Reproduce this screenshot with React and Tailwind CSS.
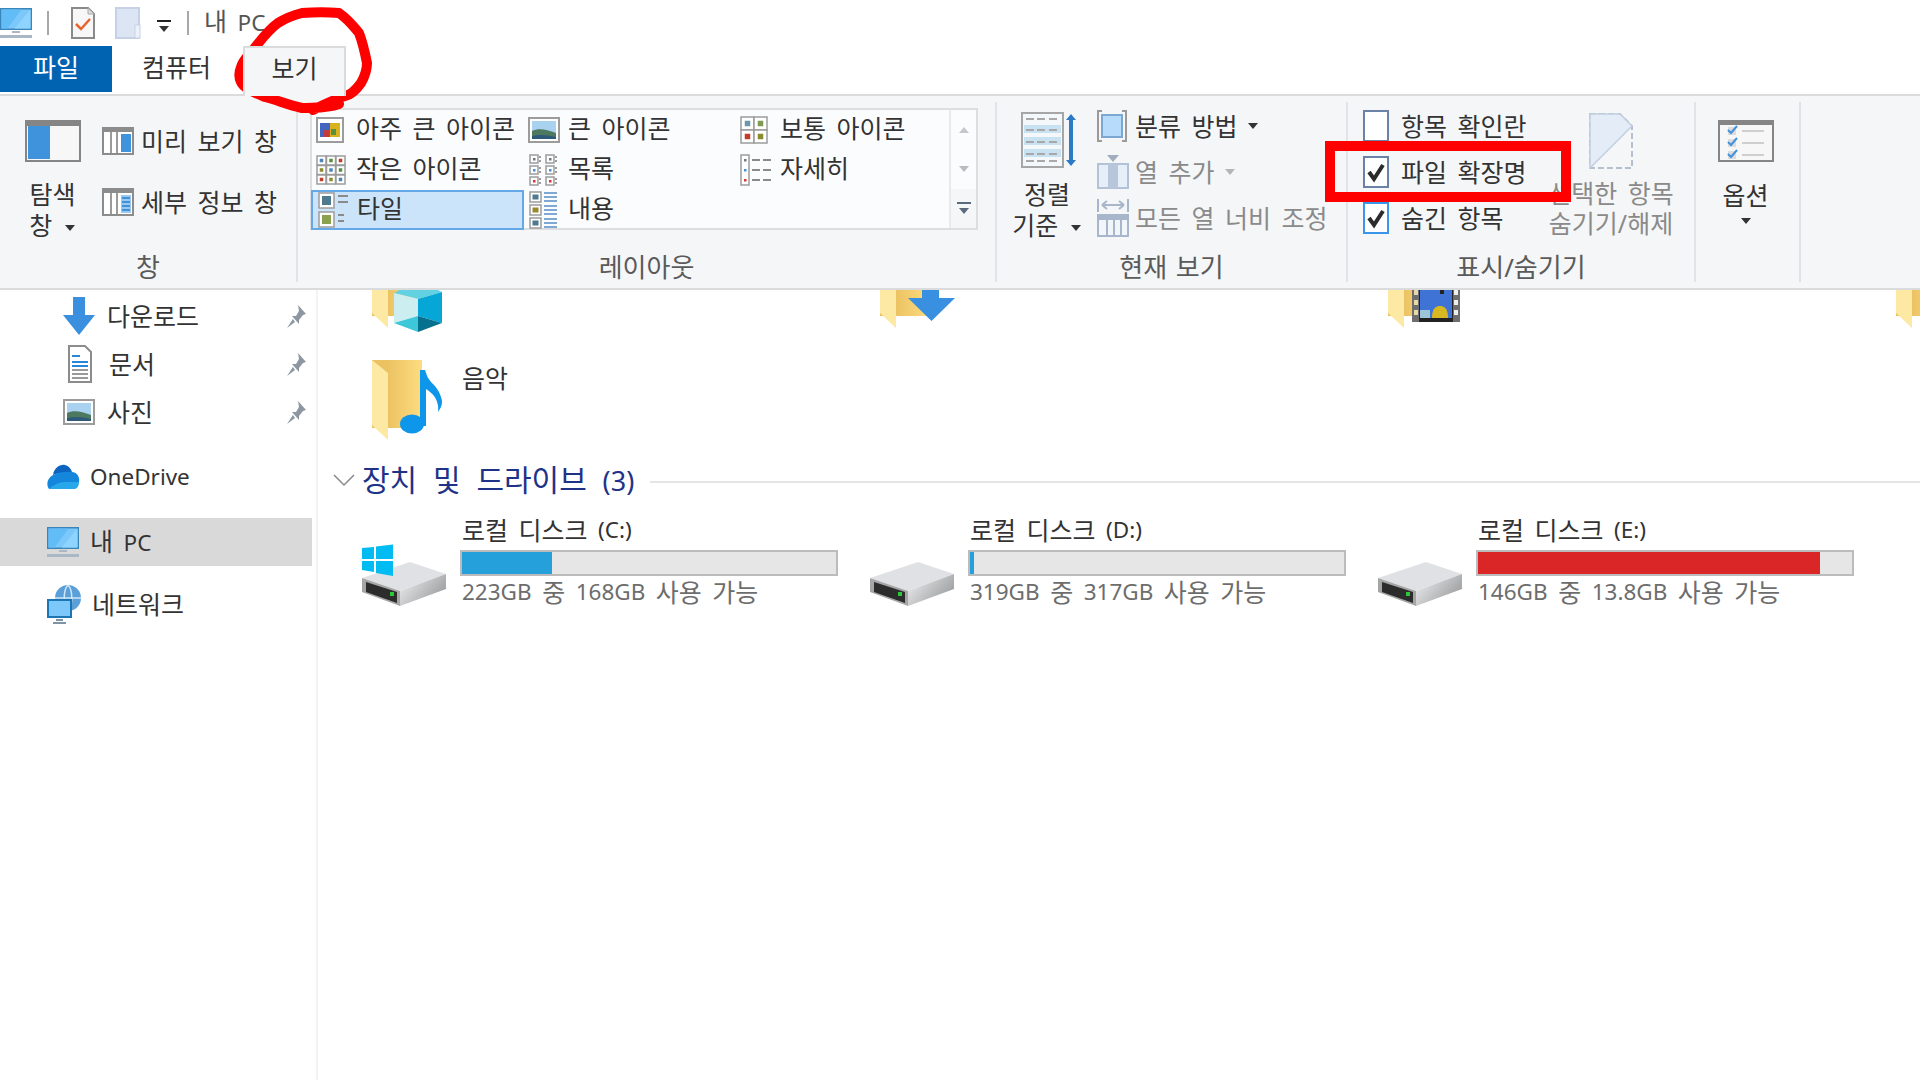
const Caret = ({ className = '', color = '#333' }) => (
  <svg className={className} width="12" height="8" viewBox="0 0 12 8"><path d="M1 1h10L6 7z" fill={color} /></svg>
)

const L = ({ children }) => <span className="text-[22.5px]">{children}</span>

const Monitor = ({ className = '' }) => (
  <svg className={className} width="32" height="30" viewBox="0 0 32 30">
    <rect x="0" y="0" width="32" height="22" fill="#3a86b8" />
    <rect x="1.5" y="1.5" width="29" height="19" fill="#7cc8fb" />
    <path d="M30.5 1.5v19h-16z" fill="#8fd4ff" />
    <path d="M1.5 1.5h20l-14 19h-6z" fill="#62bdf7" />
    <rect x="12" y="23" width="8" height="2" fill="#a9b8c4" />
    <rect x="0" y="27" width="32" height="3" fill="#a9b8c4" />
  </svg>
)

const Clipboard = () => (
  <svg width="24" height="32" viewBox="0 0 24 32">
    <path d="M1 1h16l6 6v24H1z" fill="#f7f7f7" stroke="#8a8a8a" strokeWidth="2" />
    <path d="M17 1v6h6z" fill="#ddd" stroke="#aaa" />
    <path d="M5 17l5 5 9-10" fill="none" stroke="#e8642c" strokeWidth="2.5" />
  </svg>
)

const BlankPage = () => (
  <svg width="26" height="32" viewBox="0 0 26 32">
    <rect x="1" y="1" width="23" height="30" fill="#dbe5f3" stroke="#c5d2e5" strokeWidth="2" />
    <rect x="20" y="18" width="5" height="13" fill="#eef2f8" stroke="#c5d2e5" />
  </svg>
)

const PaneIcon = ({ detail }) => (
  <svg width="32" height="28" viewBox="0 0 32 28">
    <rect x="1" y="1" width="30" height="26" fill="#fff" stroke="#8c8c8c" strokeWidth="2" />
    <rect x="2" y="2" width="28" height="3" fill="#8c8c8c" />
    <rect x="8" y="5" width="2" height="21" fill="#9a9a9a" />
    <rect x="14" y="5" width="2" height="21" fill="#9a9a9a" />
    <rect x="19" y="7" width="10" height="18" fill={detail ? '#9cc8ee' : '#3f92dc'} />
    {detail && [9, 13, 17, 21].map((y) => <rect key={y} x="20" y={y} width="8" height="2" fill="#3f92dc" />)}
  </svg>
)

const NavPaneIcon = () => (
  <svg width="56" height="42" viewBox="0 0 56 42">
    <rect x="1" y="1" width="54" height="40" fill="#f7f7f7" stroke="#858585" strokeWidth="2" />
    <rect x="2" y="2" width="52" height="4" fill="#858585" />
    <rect x="3" y="6" width="22" height="33" fill="#3f92dc" />
  </svg>
)

const ThumbGrid = ({ cols, rows, size, gap, colors }) => {
  const w = cols * size + (cols - 1) * gap + 4
  const h = rows * size + (rows - 1) * gap + 4
  const cells = []
  for (let r = 0; r < rows; r++) {
    for (let c = 0; c < cols; c++) {
      cells.push(
        <g key={`${r}-${c}`}>
          <rect x={2 + c * (size + gap) - 1} y={2 + r * (size + gap) - 1} width={size + 2} height={size + 2} fill="#fff" stroke="#9c9c9c" strokeWidth="1.5" />
          <rect x={2 + c * (size + gap) + size / 4} y={2 + r * (size + gap) + size / 4} width={size / 2} height={size / 2} fill={colors[(r * cols + c) % colors.length]} />
        </g>
      )
    }
  }
  return <svg width={w} height={h} viewBox={`0 0 ${w} ${h}`}>{cells}</svg>
}

const Landscape = () => (
  <svg width="32" height="26" viewBox="0 0 32 26">
    <rect x="1" y="1" width="30" height="24" fill="#fff" stroke="#9c9c9c" strokeWidth="2" />
    <rect x="4" y="4" width="24" height="18" fill="#a8d2f0" />
    <path d="M4 14c6-3 14-2 24 2v6H4z" fill="#4d7a5e" />
    <path d="M4 19c8-2 16-1 24 1v2H4z" fill="#2e5a7a" />
  </svg>
)

const Colorful = () => (
  <svg width="28" height="26" viewBox="0 0 28 26">
    <rect x="1" y="1" width="26" height="24" fill="#fff" stroke="#9c9c9c" strokeWidth="2" />
    <rect x="4" y="6" width="20" height="14" fill="#4466c0" />
    <rect x="14" y="6" width="10" height="14" fill="#d9b21e" />
    <rect x="7" y="13" width="6" height="7" fill="#c53a3a" />
    <rect x="15" y="12" width="5" height="6" fill="#5d8f3a" />
  </svg>
)

const SmallGlyph = ({ type }) => {
  if (type === 'extra') return <Colorful />
  if (type === 'large') return <Landscape />
  if (type === 'medium') return <ThumbGrid cols={2} rows={2} size={11} gap={2} colors={['#6d97ad', '#7f9a52', '#c23c2a', '#8a8a2e']} />
  if (type === 'small') return <ThumbGrid cols={3} rows={3} size={7} gap={2.5} colors={['#4f86b5', '#5d8f3a', '#c23c2a', '#8a8a2e']} />
  if (type === 'list') return (
    <svg width="30" height="32" viewBox="0 0 30 32">
      {[0, 11, 22].map((y, i) => [2, 18].map((x) => (
        <g key={`${x}-${y}`}>
          <rect x={x} y={y + 1} width="8" height="8" fill="#fff" stroke="#9c9c9c" strokeWidth="1.5" />
          <rect x={x + 3} y={y + 4} width="2.5" height="2.5" fill={['#777', '#3f92dc', '#d33'][i]} />
          <rect x={x + 9} y={y + 2} width="2" height="2" fill="#9c9c9c" />
          <rect x={x + 9} y={y + 6} width="2" height="2" fill="#9c9c9c" />
        </g>
      )))}
    </svg>
  )
  if (type === 'detail') return (
    <svg width="32" height="32" viewBox="0 0 32 32">
      <rect x="1" y="1" width="8" height="30" fill="#fff" stroke="#9c9c9c" strokeWidth="1.5" />
      {[5, 15, 25].map((y, i) => (
        <g key={y}>
          <rect x="4" y={y} width="2.5" height="2.5" fill={['#777', '#3f92dc', '#d33'][i]} />
          <rect x="12" y={y} width="8" height="2" fill="#8a8a8a" />
          <rect x="23" y={y} width="8" height="2" fill="#8a8a8a" />
        </g>
      ))}
    </svg>
  )
  if (type === 'tile') return (
    <svg width="32" height="38" viewBox="0 0 32 38">
      <rect x="2" y="2" width="15" height="15" fill="#fff" stroke="#9c9c9c" strokeWidth="1.5" />
      <rect x="2" y="21" width="15" height="15" fill="#fff" stroke="#9c9c9c" strokeWidth="1.5" />
      <rect x="5" y="5" width="9" height="9" fill="#4d7a8e" />
      <rect x="5" y="24" width="9" height="9" fill="#8aa24e" />
      {[4, 10, 23, 29].map((y) => <rect key={y} x="21" y={y} width={y % 2 ? 6 : 10} height="2" fill="#8a8a8a" />)}
    </svg>
  )
  return (
    <svg width="30" height="38" viewBox="0 0 30 38">
      {[1, 14, 27].map((y, i) => (
        <g key={y}>
          <rect x="2" y={y} width="11" height="10" fill="#fff" stroke="#9c9c9c" strokeWidth="1.5" />
          <rect x="4.5" y={y + 2.5} width="6" height="5" fill={['#4d7a8e', '#9a8a2e', '#4d7a8e'][i]} />
          <rect x="16" y={y} width="13" height="2" fill="#7fa8d4" />
          <rect x="16" y={y + 4} width="13" height="2" fill="#7fa8d4" />
          <rect x="16" y={y + 8} width="13" height="2" fill="#7fa8d4" />
        </g>
      ))}
    </svg>
  )
}

const SortIcon = () => (
  <svg width="58" height="56" viewBox="0 0 58 56">
    <rect x="1" y="1" width="41" height="54" fill="#f4f8fb" stroke="#a6a6a6" strokeWidth="2" />
    {[15, 27, 39].map((y) => <rect key={y} x="3" y={y - 2} width="37" height="8" fill="#c9e2f1" />)}
    {[6, 17, 29, 41, 48].map((y) => [5, 16, 28].map((x) => <rect key={`${x}-${y}`} x={x} y={y} width="8" height="2" fill="#a8a8a8" />))}
    <path d="M50 2l5 6h-3v40h3l-5 6-5-6h3V8h-3z" fill="#2a7bc4" />
  </svg>
)

const GroupByIcon = () => (
  <svg width="30" height="32" viewBox="0 0 30 32">
    <path d="M5 1H1v30h4M25 1h4v30h-4" fill="none" stroke="#9a9a9a" strokeWidth="2" />
    <rect x="5" y="5" width="20" height="22" fill="#b7dcfb" stroke="#7ba7d0" strokeWidth="2" />
  </svg>
)

const AddColumnIcon = () => (
  <svg width="32" height="34" viewBox="0 0 32 34">
    <rect x="1" y="9" width="30" height="24" fill="#e6eef8" stroke="#b3c2d6" strokeWidth="2" />
    <rect x="11" y="9" width="10" height="24" fill="#b7c6da" />
    <path d="M10 0h12l-6 7z" fill="#a0aec0" />
  </svg>
)

const FitColumnsIcon = () => (
  <svg width="32" height="38" viewBox="0 0 32 38">
    <path d="M1 0v13M31 0v13M5 6h22M5 6l5-4M5 6l5 4M27 6l-5-4M27 6l-5 4" fill="none" stroke="#a7b6cb" strokeWidth="2" />
    <rect x="1" y="16" width="30" height="21" fill="#f2f5fa" stroke="#a7b6cb" strokeWidth="2" />
    <rect x="1" y="16" width="30" height="5" fill="#a7b6cb" />
    {[9, 16, 23].map((x) => <rect key={x} x={x} y="21" width="2" height="16" fill="#a7b6cb" />)}
  </svg>
)

const HideIcon = () => (
  <svg width="44" height="56" viewBox="0 0 44 56">
    <path d="M1 1h30l12 12v42H1z" fill="none" stroke="#b5bfcf" strokeWidth="2" strokeDasharray="6 3" />
    <path d="M1 1h30l12 12L1 55z" fill="#e4ecf7" stroke="#c2cee0" strokeWidth="1.5" />
  </svg>
)

const OptionsIcon = () => (
  <svg width="56" height="42" viewBox="0 0 56 42">
    <rect x="1" y="1" width="54" height="40" fill="#f7f7f7" stroke="#858585" strokeWidth="2" />
    <rect x="2" y="2" width="52" height="3" fill="#858585" />
    {[10, 22, 34].map((y) => (
      <g key={y}>
        <rect x="10" y={y - 3} width="8" height="8" fill="#dcdcdc" />
        <path d={`M10 ${y}l3 3 6-7`} fill="none" stroke="#3f92dc" strokeWidth="2" />
        <rect x="24" y={y} width="22" height="2" fill="#cfcfcf" />
      </g>
    ))}
  </svg>
)

const CheckBox = ({ checked, hot }) => (
  <svg width="26" height="32" viewBox="0 0 26 32">
    <rect x="1" y="1" width="24" height="30" fill="#fff" stroke={hot ? '#3a96e8' : '#6a82a8'} strokeWidth="2" />
    {checked && <path d="M6 16l5 7 9-14" fill="none" stroke="#2b2b2b" strokeWidth="4" />}
  </svg>
)

const Pin = () => (
  <svg width="22" height="26" viewBox="0 0 22 26">
    <path d="M13 1l8 9-3 1-4 5 0 4-7-8 4 0 3-5z" fill="#8c97a1" />
    <path d="M8 15l-6 9 8-6z" fill="#8c97a1" />
  </svg>
)

const DownArrow = () => (
  <svg width="32" height="38" viewBox="0 0 32 38">
    <path d="M10 0h12v18h10L16 38 0 18h10z" fill="#3a8fdf" />
  </svg>
)

const DocIcon = () => (
  <svg width="24" height="38" viewBox="0 0 24 38">
    <path d="M1 1h16l6 6v30H1z" fill="#fff" stroke="#8c8c8c" strokeWidth="2" />
    {[10, 16, 20, 24, 28, 32].map((y, i) => <rect key={y} x="4" y={y} width={i === 0 ? 8 : 16} height="2" fill={i < 3 ? '#2a86d6' : '#9a9a9a'} />)}
  </svg>
)

const Cloud = () => (
  <svg width="33" height="26" viewBox="0 0 33 26">
    <path d="M6 12c1-7 7-11 12-10 4 1 6 4 7 7-8 0-16 2-19 3z" fill="#0a64c0" />
    <path d="M2 26C-1 22 0 15 6 12c6-3 14-4 19-3 5 0 8 5 7 10z" fill="#1486dc" />
    <path d="M2 26c3-3 8-6 14-7 6 0 12 0 16 0 0 3-1 6-4 7z" fill="#28a8ea" />
  </svg>
)

const NetworkIcon = () => (
  <svg width="34" height="40" viewBox="0 0 34 40">
    <circle cx="21" cy="14" r="13" fill="#5a9fd8" />
    <path d="M21 1c-5 5-5 21 0 26M21 1c5 5 5 21 0 26M8 14h26" fill="none" stroke="#cfe6f8" strokeWidth="1.5" />
    <rect x="1" y="16" width="23" height="17" fill="#7cc8fb" stroke="#1c76b3" strokeWidth="2" />
    <rect x="9" y="35" width="7" height="2" fill="#7f93a6" />
    <rect x="6" y="38" width="13" height="2" fill="#7f93a6" />
  </svg>
)

const Folder = ({ children }) => (
  <div className="relative w-[50px] h-[80px]">
    <svg width="50" height="80" viewBox="0 0 50 80">
      <defs>
        <linearGradient id="folderBody" x1="0" x2="1" y1="0" y2="0">
          <stop offset="0.3" stopColor="#ebc262" />
          <stop offset="1" stopColor="#fddc80" />
        </linearGradient>
      </defs>
      <rect x="0" y="0" width="50" height="68" fill="url(#folderBody)" />
      <path d="M0 0l16 13v67L0 65z" fill="#fde8a4" />
    </svg>
    {children}
  </div>
)

const Cube = () => (
  <svg className="absolute left-[22px] top-[28px]" width="48" height="56" viewBox="0 0 48 56">
    <path d="M0 17L24 4l24 12-24 7z" fill="#62d2e2" />
    <path d="M0 17l24 6v17L0 47z" fill="#cdeef0" />
    <path d="M24 23l24-7v31l-24-7z" fill="#06a6d6" />
    <path d="M0 47l24-7v16z" fill="#3cc8d8" />
    <path d="M24 40l24 7-24 9z" fill="#06708f" />
  </svg>
)

const FolderArrow = () => (
  <svg className="absolute left-[28px] top-[28px]" width="47" height="46" viewBox="0 0 47 46">
    <path d="M14 0h17v22h16L23.500 45 0 22h14z" fill="#3a90e0" />
  </svg>
)

const Film = () => (
  <svg className="absolute left-[24px] top-[28px]" width="48" height="46" viewBox="0 0 48 46">
    <rect width="48" height="46" fill="#6e6e6e" />
    <rect x="7" y="0" width="34" height="46" fill="#222" />
    <rect x="8" y="4" width="32" height="38" fill="#3f74d6" />
    <rect x="8" y="34" width="10" height="8" fill="#9cc6d8" />
    <path d="M20 42c0-10 4-12 8-12s8 2 8 12z" fill="#d8b820" />
    <path d="M24 4h12l-3 9h-6z" fill="#c53a3a" />
    <rect x="28" y="13" width="4" height="5" fill="#222" />
    {[4, 14, 24, 34].map((y) => <g key={y}><rect x="2" y={y} width="4" height="5" fill="#e8d8a8" /><rect x="42" y={y} width="4" height="5" fill="#eee" /></g>)}
  </svg>
)

const Note = () => (
  <svg className="absolute left-[28px] top-[10px]" width="42" height="64" viewBox="0 0 42 64">
    <path d="M20 0h5c2 6 3 9 8 14 6 6 9 14 9 18 0 4-2 7-4 10 1-6-1-12-4-16-2-3-5-5-8-7v37h-6z" fill="#0d96ea" />
    <ellipse cx="12" cy="54" rx="12" ry="9.5" fill="#0d96ea" />
  </svg>
)

const DriveIcon = ({ system, gid }) => (
  <svg width="86" height="66" viewBox="0 0 86 66">
    <defs>
      <linearGradient id={gid} x1="0" x2="1" y1="0" y2="0.6">
        <stop offset="0" stopColor="#f2f2f3" />
        <stop offset="1" stopColor="#9c9ea0" />
      </linearGradient>
    </defs>
    <path d="M1 36l48-16 36 12-46 17z" fill="#dfe1e4" />
    <path d="M39 49l46-17v15L39 64z" fill={`url(#${gid})`} />
    <path d="M1 36l38 13v15L1 50z" fill="#a5a5a5" />
    <path d="M5 40l31 10v11L5 50z" fill="#2c2c2c" />
    <rect x="29" y="50" width="4" height="4" fill="#2bc93a" />
    {system && <g fill="#00bcf2"><path d="M1 6l12-1v12H1zM15 4.500l17-2v14.500H15zM1 19h12v11l-12-2zM15 19h17v15l-17-3z" /></g>}
  </svg>
)

const Group = ({ label, className = '', children }) => (
  <div className={`flex ${className}`}>
    <div className="flex-1 min-w-0 flex flex-col">
      <div className="h-[152px] flex">{children}</div>
      {label && <div className="h-[38px] flex items-center justify-center text-[26px] text-[#5a5a5a] [word-spacing:2px]">{label}</div>}
    </div>
    <div className="w-[2px] my-[6px] bg-[#e1e3e6]" />
  </div>
)

const galleryItems = [
  { key: 'extra', label: '아주 큰 아이콘' },
  { key: 'large', label: '큰 아이콘' },
  { key: 'medium', label: '보통 아이콘' },
  { key: 'small', label: '작은 아이콘' },
  { key: 'list', label: '목록' },
  { key: 'detail', label: '자세히' },
  { key: 'tile', label: '타일', active: true },
  { key: 'content', label: '내용' },
]

const RowItem = ({ icon, label, disabled, caret }) => (
  <div className={`h-[46px] flex items-center ${disabled ? 'text-[#8a8a8a]' : 'text-[#333]'}`}>
    <div className="w-[38px] flex justify-start">{icon}</div>
    <span>{label}</span>
    {caret && <Caret className="ml-[9px]" color={disabled ? '#b5b5b5' : '#333'} />}
  </div>
)

const NavItem = ({ icon, label, pin, left, textLeft, active, className = '' }) => (
  <div className={`h-[48px] w-[312px] flex items-center ${active ? 'bg-[#d9d9d9]' : ''} ${className}`}>
    <div className={`flex justify-center ${left} ${textLeft}`}>{icon}</div>
    <span className="flex-1">{label}</span>
    {pin && <span className="mr-[5px] mt-[2px]"><Pin /></span>}
  </div>
)

const drives = [
  { id: 'c', name: '로컬 디스크 ', tag: '(C:)', total: '223GB', used: '168GB', fill: 'w-[90px] bg-[#26a0da]', system: true },
  { id: 'd', name: '로컬 디스크 ', tag: '(D:)', total: '319GB', used: '317GB', fill: 'w-[4px] bg-[#26a0da]' },
  { id: 'e', name: '로컬 디스크 ', tag: '(E:)', total: '146GB', used: '13.8GB', fill: 'w-[342px] bg-[#da2626]' },
]

export default function App() {
  return (
    <div className="relative w-[1920px] h-[1080px] overflow-hidden bg-white text-[25px] leading-none text-[#333] [font-family:'Noto_Sans','Noto_Sans_CJK_KR',sans-serif] [word-spacing:4px]">
      {/* quick access bar */}
      <div className="h-[46px] flex items-center">
        <Monitor />
        <div className="w-[2px] h-[24px] bg-[#a8a8a8] ml-[15px]" />
        <div className="ml-[22px]"><Clipboard /></div>
        <div className="ml-[20px]"><BlankPage /></div>
        <div className="ml-[16px] mt-[6px] flex flex-col items-center">
          <div className="w-[14px] h-[2px] bg-[#222] mb-[3px]" />
          <Caret />
        </div>
        <div className="w-[2px] h-[24px] bg-[#a8a8a8] ml-[16px]" />
        <span className="ml-[15px] text-[#555] pb-[3px]">내 <L>PC</L></span>
      </div>

      {/* tabs */}
      <div className="h-[48px] flex">
        <div className="w-[112px] h-[46px] bg-[#0063b1] text-white flex items-center justify-center pb-[3px]">파일</div>
        <div className="w-[131px] h-[46px] flex items-center justify-center pb-[3px] pr-[2px]">컴퓨터</div>
        <div className="w-[103px] h-[50px] bg-[#f5f6f7] border-2 border-b-0 border-[#dadbdc] flex items-center justify-center pb-[7px] z-10">보기</div>
      </div>

      {/* ribbon */}
      <div className="h-[196px] flex bg-[#f5f6f7] border-y-2 border-[#dadbdc] pr-[118px]">
        <Group label="창" className="w-[298px]">
          <div className="w-[105px] pt-[24px] flex flex-col items-center">
            <NavPaneIcon />
            <div className="mt-[17px] leading-[31px] text-center">
              탐색<br />창 <Caret className="inline ml-[1px]" />
            </div>
          </div>
          <div className="-ml-[3px] pt-[25px] flex flex-col gap-[21px]">
            <div className="h-[40px] flex items-center gap-[7px]"><PaneIcon />미리 보기 창</div>
            <div className="h-[40px] flex items-center gap-[7px]"><PaneIcon detail />세부 정보 창</div>
          </div>
        </Group>

        <Group label="레이아웃" className="w-[699px]">
          <div className="ml-[12px] mt-[12px] w-[668px] h-[122px] flex border-2 border-[#dcdee0] bg-[#fbfcfd]">
            <div className="w-[637px] grid grid-cols-[212px_212px_1fr] grid-rows-[40px_40px_40px]">
              {galleryItems.map((item) => (
                <div
                  key={item.key}
                  className={`flex items-center pl-[4px] ${item.active ? 'bg-[#cce4f9] border-2 border-[#66a7e8] -ml-[1px] pl-[3px]' : ''}`}
                >
                  <div className="w-[40px] flex justify-start"><SmallGlyph type={item.key} /></div>
                  <span className="pb-[3px]">{item.label}</span>
                </div>
              ))}
            </div>
            <div className="flex-1 flex flex-col border-l-2 border-[#e8eaec]">
              <div className="h-[40px] flex items-center justify-center"><Caret className="rotate-180" color="#c4c8cc" /></div>
              <div className="h-[40px] flex items-center justify-center"><Caret color="#b8bcc0" /></div>
              <div className="h-[40px] flex flex-col items-center justify-center bg-[#f5f6f7] gap-[3px]">
                <div className="w-[14px] h-[2px] bg-[#5a6a7e]" />
                <Caret color="#5a6a7e" />
              </div>
            </div>
          </div>
        </Group>

        <Group label="현재 보기" className="w-[351px]">
          <div className="w-[100px] pt-[16px] flex flex-col items-center">
            <div className="ml-[6px]"><SortIcon /></div>
            <div className="mt-[11px] leading-[31px] text-center">
              정렬<br />기준 <Caret className="inline ml-[1px]" />
            </div>
          </div>
          <div className="pt-[7px] whitespace-nowrap">
            <RowItem icon={<GroupByIcon />} label="분류 방법" caret />
            <RowItem icon={<AddColumnIcon />} label="열 추가" caret disabled />
            <RowItem icon={<FitColumnsIcon />} label="모든 열 너비 조정" disabled />
          </div>
        </Group>

        <Group label="표시/숨기기" className="w-[348px]">
          <div className="pl-[15px] pt-[7px] w-[180px] whitespace-nowrap">
            <RowItem icon={<CheckBox />} label="항목 확인란" />
            <RowItem icon={<CheckBox checked />} label="파일 확장명" />
            <RowItem icon={<CheckBox checked hot />} label="숨긴 항목" />
          </div>
          <div className="flex-1 pt-[17px] flex flex-col items-center text-[#8a8a8a]">
            <HideIcon />
            <div className="mt-[9px] leading-[30px] text-center whitespace-nowrap">선택한 항목<br />숨기기/해제</div>
          </div>
        </Group>

        <Group className="w-[105px]">
          <div className="flex-1 pt-[24px] pr-[4px] flex flex-col items-center">
            <OptionsIcon />
            <div className="mt-[17px] leading-[32px]">옵션</div>
            <Caret className="mt-[6px]" />
          </div>
        </Group>
      </div>

      {/* body */}
      <div className="flex h-[790px]">
        <div className="w-[318px] border-r-2 border-[#f3f3f3] pt-[2px]">
          <NavItem icon={<DownArrow />} label="다운로드" pin left="ml-[63px]" textLeft="mr-[12px]" />
          <NavItem icon={<DocIcon />} label="문서" pin left="ml-[68px]" textLeft="mr-[17px]" />
          <NavItem icon={<Landscape />} label="사진" pin left="ml-[63px]" textLeft="mr-[12px]" />
          <NavItem icon={<Cloud />} label={<L>OneDrive</L>} left="ml-[47px]" textLeft="mr-[10px]" className="mt-[16px]" />
          <NavItem icon={<Monitor />} label={<>내 <L>PC</L></>} left="ml-[47px]" textLeft="mr-[11px]" active className="mt-[18px]" />
          <NavItem icon={<NetworkIcon />} label="네트워크" left="ml-[47px]" textLeft="mr-[11px]" className="mt-[14px]" />
        </div>

        <div className="flex-1 min-w-0">
          <div className="h-[43px] overflow-hidden flex pl-[54px]">
            <div className="w-[508px] shrink-0 -mt-[42px]"><Folder><Cube /></Folder></div>
            <div className="w-[508px] shrink-0 -mt-[42px]"><Folder><FolderArrow /></Folder></div>
            <div className="w-[508px] shrink-0 -mt-[42px]"><Folder><Film /></Folder></div>
            <div className="w-[508px] shrink-0 -mt-[42px]"><Folder /></div>
          </div>

          <div className="mt-[27px] pl-[54px] flex">
            <Folder><Note /></Folder>
            <span className="ml-[40px] mt-[6px]">음악</span>
          </div>

          <div className="mt-[20px] h-[40px] flex items-center pl-[14px]">
            <svg width="24" height="14" viewBox="0 0 24 14"><path d="M2 2l10 10L22 2" fill="none" stroke="#8a8a8a" strokeWidth="1.5" /></svg>
            <span className="ml-[6px] text-[30px] text-[#1e3287] [word-spacing:8px]">장치 및 드라이브 <span className="text-[27px]">(3)</span></span>
            <div className="flex-1 h-[2px] bg-[#e5e5e5] ml-[16px] mt-[3px]" />
          </div>

          <div className="mt-[14px] flex pl-[43px]">
            {drives.map((d) => (
              <div key={d.id} className="w-[508px] shrink-0 flex">
                <div className="w-[99px] pt-[28px]"><DriveIcon system={d.system} gid={`drive-${d.id}`} /></div>
                <div className="w-[378px]">
                  <div className="h-[32px] pl-[2px] flex items-center whitespace-pre">{d.name}<L>{d.tag}</L></div>
                  <div className="mt-[4px] h-[26px] flex border-2 border-[#bcbcbc] bg-[#e6e6e6]">
                    <div className={d.fill} />
                  </div>
                  <div className="h-[32px] pl-[2px] flex items-center whitespace-pre text-[#6d6d6d]"><L>{d.total}</L> 중 <L>{d.used}</L> 사용 가능</div>
                </div>
              </div>
            ))}
          </div>
        </div>
      </div>

      {/* hand drawn annotations */}
      <svg className="absolute left-0 top-0 pointer-events-none" width="420" height="120" viewBox="0 0 420 120">
        <path d="M339 104c-14 5-26 3-37 4-14-3-25-8-37-11-10-4-22-9-24-15-3-6-2-10 0-15 2-7 8-12 12-17 8-10 15-20 25-27 8-5 16-8 24-10 12-1 26-1 37 0 10 7 15 14 20 20 4 10 6 20 8 30 0 8-2 13-6 20-5 7-10 12-16 13-10 3-19 8-32 14" fill="none" stroke="#ff0000" strokeWidth="10" strokeLinecap="round" strokeLinejoin="round" />
      </svg>
      <div className="absolute left-[1325px] top-[141px] w-[246px] h-[61px] border-[10px] border-[#ff0000] pointer-events-none" />
    </div>
  )
}
